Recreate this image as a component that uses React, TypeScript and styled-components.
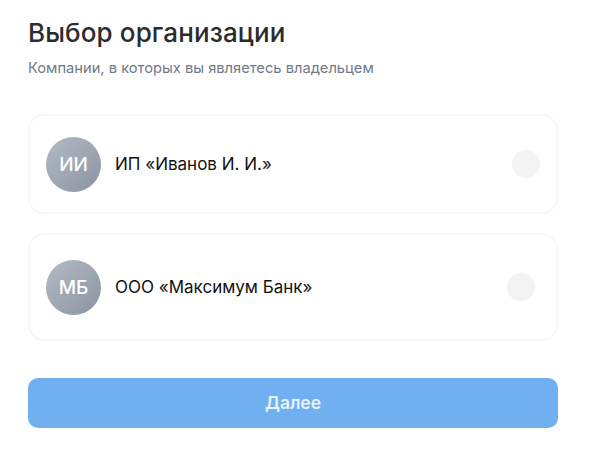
import React from "react";
import styled, { createGlobalStyle } from "styled-components";

const Global = createGlobalStyle`
  html, body { margin: 0; padding: 0; background: #fff; }
  body { font-family: "Inter", "Noto Sans", sans-serif; }
`;

const Page = styled.main`
  width: 589px;
  height: 452px;
  box-sizing: border-box;
  padding: 17px 31px 0 28px;
  display: flex;
  flex-direction: column;
`;

const Title = styled.h1`
  margin: 0;
  font-size: 26px;
  line-height: 32px;
  font-weight: 500;
  letter-spacing: 0.12px;
  color: #2b2c2e;
`;

const Subtitle = styled.p`
  margin: 10px 0 0;
  font-size: 14.7px;
  line-height: 18px;
  color: #6f7a86;
`;

const List = styled.div`
  margin-top: 37px;
  display: flex;
  flex-direction: column;
  gap: 19px;
`;

const Card = styled.div<{ $height: number; $inset: number }>`
  height: ${(p) => p.$height}px;
  box-sizing: border-box;
  padding: 0 ${(p) => p.$inset}px 0 16px;
  display: flex;
  align-items: center;
  gap: 14px;
  background: #fff;
  border: 2px solid #f7f7f7;
  border-radius: 16px;
`;

const Avatar = styled.div`
  width: 55px;
  height: 55px;
  flex: none;
  border-radius: 50%;
  display: flex;
  align-items: center;
  justify-content: center;
  background: linear-gradient(135deg, #b3bbc5, #8a93a0);
  color: #fff;
  font-size: 19px;
  font-weight: 500;
`;

const Name = styled.span`
  flex: 1;
  font-size: 17px;
  line-height: 20px;
  color: #111;
`;

const Radio = styled.span`
  width: 28px;
  height: 28px;
  flex: none;
  border-radius: 50%;
  background: #f3f3f3;
`;

const NextButton = styled.button`
  margin-top: 37px;
  height: 50px;
  padding: 0 0 2px;
  border: 0;
  border-radius: 10px;
  background: #70b0f1;
  color: #e9f3fd;
  font-family: inherit;
  font-size: 17.5px;
  font-weight: 600;
`;

const orgs = [
  { initials: "ИИ", name: "ИП «Иванов И. И.»", height: 100, inset: 16 },
  { initials: "МБ", name: "ООО «Максимум Банк»", height: 108, inset: 21 },
];

export default function App() {
  return (
    <Page>
      <Global />
      <Title>Выбор организации</Title>
      <Subtitle>Компании, в которых вы являетесь владельцем</Subtitle>
      <List>
        {orgs.map((o) => (
          <Card key={o.initials} $height={o.height} $inset={o.inset}>
            <Avatar>{o.initials}</Avatar>
            <Name>{o.name}</Name>
            <Radio />
          </Card>
        ))}
      </List>
      <NextButton>Далее</NextButton>
    </Page>
  );
}
